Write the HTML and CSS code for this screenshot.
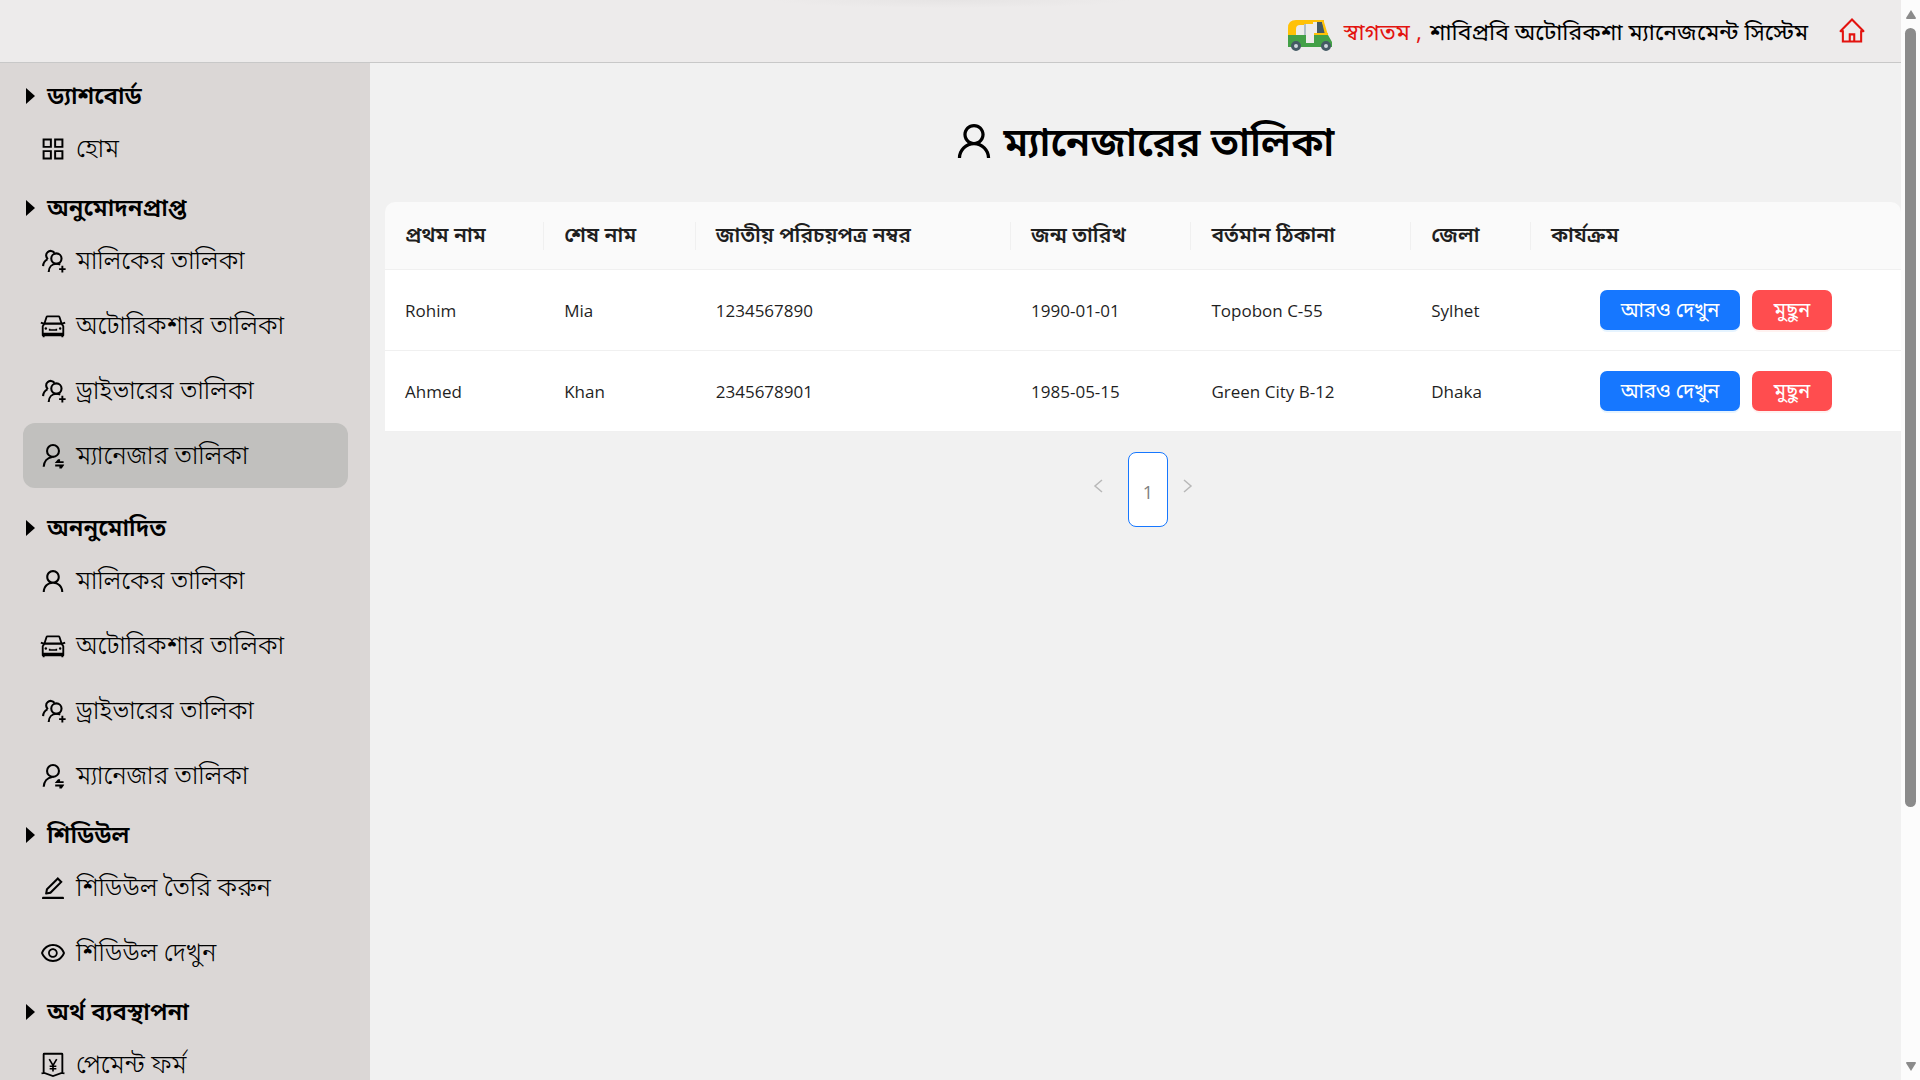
FILE: index.html
```
<!DOCTYPE html>
<html lang="bn">
<head>
<meta charset="utf-8">
<title>ম্যানেজারের তালিকা</title>
<link rel="stylesheet" href="styles.css">
</head>
<body>
<svg class="sprite" aria-hidden="true">
  <symbol id="user" viewBox="0 0 1024 1024"><path d="M858.5 763.6a374 374 0 00-80.6-119.5 375.63 375.63 0 00-119.5-80.6c-.4-.2-.8-.3-1.2-.5C719.5 518 760 444.7 760 362c0-137-111-248-248-248S264 225 264 362c0 82.7 40.5 156 102.8 201.1-.4.2-.8.3-1.2.5-44.8 18.9-85 46-119.5 80.6a375.63 375.63 0 00-80.6 119.5A371.7 371.7 0 00136 901.8a8 8 0 008 8.2h60c4.4 0 7.9-3.5 8-7.8 2-77.2 33-149.5 87.8-204.3 56.7-56.7 132-87.9 212.2-87.9s155.5 31.2 212.2 87.9C779 752.7 810 825 812 902.2c.1 4.4 3.6 7.8 8 7.8h60a8 8 0 008-8.2c-1-47.8-10.9-94.3-29.5-138.2zM512 534c-45.9 0-89.1-17.9-121.6-50.4S340 407.9 340 362c0-45.9 17.9-89.1 50.4-121.6S466.1 190 512 190s89.1 17.9 121.6 50.4S684 316.1 684 362c0 45.9-17.9 89.1-50.4 121.6S557.9 534 512 534z"/></symbol>
  <symbol id="grid" viewBox="0 0 1024 1024"><g fill="none" stroke="currentColor" stroke-width="72"><path d="M168 168h266v266H168zM590 168h266v266H590zM168 590h266v266H168zM590 590h266v266H590z"/></g></symbol>
  <symbol id="users" viewBox="0 0 1024 1024"><g fill="none" stroke="currentColor" stroke-width="76"><circle cx="636" cy="422" r="188"/><path d="M354 912C360 740 470 614 640 614c50 0 96 10 136 32M150 700c8-126 60-206 158-248M326 446c-80-66-86-200-14-254 76-74 196-62 254 22"/><path d="M854 690v240M734 810h240" stroke-width="70"/></g></symbol>
  <symbol id="switch" viewBox="0 0 1024 1024"><g fill="none" stroke="currentColor" stroke-width="76"><circle cx="512" cy="326" r="218"/><path d="M172 908c8-190 130-336 310-362"/></g><path d="M770 630v74h130v68H588c-8 0-10-8-5-13l112-129zM592 826h320c8 0 12 8 7 14L830 970h-84v-76H592z"/></symbol>
  <symbol id="car" viewBox="0 0 1024 1024"><g fill="none" stroke="currentColor" stroke-width="68"><path d="M130 428h764M204 400l72-216q8-22 30-22h412q22 0 30 22l72 216M136 850V520l68-100h616l68 100v330zM124 790h776M68 386l104 42M956 386l-104 42M170 850v72M854 850v72" stroke-linejoin="round"/><path d="M388 608v50h248v-50" stroke-width="56"/></g><circle cx="250" cy="602" r="44"/><circle cx="774" cy="602" r="44"/></symbol>
  <symbol id="edit" viewBox="0 0 1024 1024"><path d="M257.700 752c2 0 4-.2 6-.5L431.900 722c2-.4 3.900-1.300 5.300-2.800l423.900-423.900a9.960 9.960 0 000-14.100L694.900 114.900c-1.900-1.900-4.400-2.900-7.100-2.900s-5.200 1-7.100 2.900L256.800 538.800c-1.500 1.500-2.400 3.300-2.800 5.300l-29.500 168.200a33.500 33.500 0 009.400 29.800c6.600 6.400 14.900 9.900 23.800 9.900zm67.400-174.400L687.800 215l73.300 73.300-362.700 362.600-88.900 15.700 15.600-89zM880 836H144c-17.700 0-32 14.300-32 32v36c0 4.400 3.600 8 8 8h784c4.400 0 8-3.600 8-8v-36c0-17.700-14.300-32-32-32z"/></symbol>
  <symbol id="eye" viewBox="0 0 1024 1024"><path d="M942.2 486.2C847.4 286.5 704.1 186 512 186c-192.2 0-335.4 100.5-430.2 300.3a60.3 60.3 0 000 51.5C176.6 737.5 319.900 838 512 838c192.200 0 335.400-100.500 430.200-300.300 7.700-16.200 7.700-35 0-51.500zM512 766c-161.300 0-279.400-81.800-362.700-254C232.600 339.800 350.700 258 512 258c161.300 0 279.400 81.800 362.700 254C791.500 684.200 673.400 766 512 766zm-4-430c-97.200 0-176 78.800-176 176s78.800 176 176 176 176-78.800 176-176-78.800-176-176-176zm0 288c-61.900 0-112-50.100-112-112s50.100-112 112-112 112 50.100 112 112-50.100 112-112 112z"/></symbol>
  <symbol id="pay" viewBox="0 0 1024 1024"><g fill="none" stroke="currentColor" stroke-width="68"><path d="M170 790V120q0-20 20-20h644q20 0 20 20v670M92 820l100-20 320 116 320-116 100 20"/><path d="M376 300l136 230 136-230M512 530v220M390 558h244M390 648h244" stroke-width="60"/></g></symbol>
  <symbol id="home" viewBox="0 0 1024 1024"><g fill="none" stroke="currentColor" stroke-width="76"><path d="M96 508L512 94l416 414q10 10-4 10H846v376H178V518H100q-14 0-4-10zM430 894V634h164v260"/></g></symbol>
</svg>
<div class="window">
  <div class="app">
    <header class="topbar">
      <svg class="rickshaw" viewBox="0 0 44 31" aria-hidden="true">
        <path d="M0 19V8Q0 0 8 0h28v2H25v17z" fill="#ffc107"/>
        <path d="M8 15V9q0-4 4-4h4v10zM18 4h8v19h-8z" fill="#edebeb"/>
        <path d="M16 4h2v12h-2z" fill="#b0bec5"/>
        <path d="M29 2h5l4 11H29z" fill="#455a64"/>
        <path d="M34 2h2l4 13h-3z" fill="#ffc107"/>
        <path d="M0 15h18v8h8v-8h14l4 7v5H0z" fill="#43a047"/>
        <path d="M26 13h14v2H26z" fill="#ffc107"/>
        <g fill="#cfd8dc" stroke="#455a64" stroke-width="3"><circle cx="8" cy="26" r="3.500"/><circle cx="38" cy="26" r="3.500"/></g>
      </svg>
      <p class="welcome"><span class="greeting">স্বাগতম ,</span><span>শাবিপ্রবি অটোরিকশা ম্যানেজমেন্ট সিস্টেম</span></p>
      <a class="home-link" href="#" aria-label="হোম"><svg class="icon"><use href="#home"/></svg></a>
    </header>
    <div class="body">
      <nav class="sidebar">
        <h2 class="section">ড্যাশবোর্ড</h2>
        <a class="item" href="#"><svg class="icon"><use href="#grid"/></svg>হোম</a>
        <h2 class="section">অনুমোদনপ্রাপ্ত</h2>
        <a class="item" href="#"><svg class="icon"><use href="#users"/></svg>মালিকের তালিকা</a>
        <a class="item" href="#"><svg class="icon"><use href="#car"/></svg>অটোরিকশার তালিকা</a>
        <a class="item" href="#"><svg class="icon"><use href="#users"/></svg>ড্রাইভারের তালিকা</a>
        <a class="item active" href="#"><svg class="icon"><use href="#switch"/></svg>ম্যানেজার তালিকা</a>
        <h2 class="section">অননুমোদিত</h2>
        <a class="item" href="#"><svg class="icon"><use href="#user"/></svg>মালিকের তালিকা</a>
        <a class="item" href="#"><svg class="icon"><use href="#car"/></svg>অটোরিকশার তালিকা</a>
        <a class="item" href="#"><svg class="icon"><use href="#users"/></svg>ড্রাইভারের তালিকা</a>
        <a class="item" href="#"><svg class="icon"><use href="#switch"/></svg>ম্যানেজার তালিকা</a>
        <h2 class="section">শিডিউল</h2>
        <a class="item" href="#"><svg class="icon"><use href="#edit"/></svg>শিডিউল তৈরি করুন</a>
        <a class="item" href="#"><svg class="icon"><use href="#eye"/></svg>শিডিউল দেখুন</a>
        <h2 class="section">অর্থ ব্যবস্থাপনা</h2>
        <a class="item" href="#"><svg class="icon"><use href="#pay"/></svg>পেমেন্ট ফর্ম</a>
      </nav>
      <main class="content">
        <h1 class="title"><svg class="title-icon"><use href="#user"/></svg>ম্যানেজারের তালিকা</h1>
        <table class="managers">
          <colgroup><col class="c-first"><col class="c-last"><col class="c-nid"><col class="c-birth"><col class="c-address"><col class="c-district"><col></colgroup>
          <thead>
            <tr><th>প্রথম নাম</th><th>শেষ নাম</th><th>জাতীয় পরিচয়পত্র নম্বর</th><th>জন্ম তারিখ</th><th>বর্তমান ঠিকানা</th><th>জেলা</th><th>কার্যক্রম</th></tr>
          </thead>
          <tbody>
            <tr><td>Rohim</td><td>Mia</td><td>1234567890</td><td>1990-01-01</td><td>Topobon C-55</td><td>Sylhet</td><td><div class="actions"><button class="btn more" type="button">আরও দেখুন</button><button class="btn delete" type="button">মুছুন</button></div></td></tr>
            <tr><td>Ahmed</td><td>Khan</td><td>2345678901</td><td>1985-05-15</td><td>Green City B-12</td><td>Dhaka</td><td><div class="actions"><button class="btn more" type="button">আরও দেখুন</button><button class="btn delete" type="button">মুছুন</button></div></td></tr>
          </tbody>
        </table>
        <div class="pagination">
          <button class="step" type="button" disabled aria-label="আগের পাতা"><svg width="10" height="14" viewBox="0 0 10 14"><path d="M9 1L2 7l7 6"/></svg></button>
          <button class="page" type="button">1</button>
          <button class="step" type="button" disabled aria-label="পরের পাতা"><svg width="10" height="14" viewBox="0 0 10 14"><path d="M1 1l7 6-7 6"/></svg></button>
        </div>
      </main>
    </div>
  </div>
  <div class="scrollbar" aria-hidden="true">
    <svg width="12" height="9" viewBox="0 0 12 9"><path d="M6 0l5 8q0 1-1 1H2q-1 0-1-1z"/></svg>
    <div class="track"><div class="thumb"></div></div>
    <svg width="12" height="9" viewBox="0 0 12 9"><path d="M6 9l5-8q0-1-1-1H2Q1 0 1 1z"/></svg>
  </div>
</div>
</body>
</html>
```
FILE: styles.css
```
* { box-sizing: border-box; }

body {
  margin: 0;
  background: #f1f1f1;
  color: #000;
  font-family: "Open Sans", "Noto Sans Bengali", sans-serif;
}

.sprite { display: none; }

.window { display: flex; height: 100vh; overflow: hidden; }

.app { flex: 1; min-width: 0; display: flex; flex-direction: column; }

.icon { width: 28px; height: 28px; flex: none; display: block; fill: currentColor; }

/* Top bar */
.topbar {
  display: flex;
  flex: none;
  align-items: center;
  justify-content: flex-end;
  height: 63px;
  padding-right: 35px;
  background: radial-gradient(180px 8px at 50% 0, #e6e4e4, #edebeb) #edebeb;
  border-bottom: 1px solid #c8c8c8;
}
.rickshaw { width: 44px; height: 31px; margin: 8px 12px 0 0; }
.welcome { display: flex; gap: 8px; margin: 0; font-size: 23px; line-height: 32px; white-space: nowrap; }
.greeting { color: #e3130f; }
.home-link { margin-left: 30px; color: #e3130f; }

.body { display: flex; flex: 1; min-height: 0; }

/* Sidebar */
.sidebar {
  flex: none;
  width: 370px;
  padding: 6px 22px 0 23px;
  background: #dbd7d6;
  overflow: hidden;
}
.section {
  display: flex;
  align-items: center;
  gap: 12px;
  height: 47px;
  margin: 0;
  padding: 7px 0 0 3px;
  font-size: 24px;
  font-weight: 600;
}
.section::before {
  content: "";
  border-left: 9px solid #000;
  border-top: 8px solid transparent;
  border-bottom: 8px solid transparent;
}
.item {
  display: flex;
  align-items: center;
  gap: 9px;
  height: 65px;
  padding: 0 16px;
  border-radius: 12px;
  color: #000;
  font-size: 25px;
  font-weight: 300;
  text-decoration: none;
  white-space: nowrap;
}
.active { margin-bottom: 13px; background: #c1c0be; }

/* Content */
.content { flex: 1; min-width: 0; padding: 46px 0 0 15px; }
.title {
  display: flex;
  align-items: center;
  justify-content: center;
  gap: 8px;
  margin: 0 0 29px;
  font-size: 40px;
  font-weight: 600;
  line-height: 64px;
}
.title-icon { width: 44px; height: 44px; }

.managers {
  width: 100%;
  table-layout: fixed;
  border-collapse: separate;
  border-spacing: 0;
  color: #1f1f1f;
  font-size: 17px;
}
.c-first { width: 10.5%; }
.c-last { width: 10%; }
.c-nid { width: 20.8%; }
.c-birth { width: 11.9%; }
.c-address { width: 14.5%; }
.c-district { width: 7.9%; }
.managers th, .managers td {
  padding: 0 20px;
  border-bottom: 1px solid #f0f0f0;
  text-align: left;
  white-space: nowrap;
}
.managers th {
  height: 68px;
  font-size: 21px;
  font-weight: 600;
  background: linear-gradient(#f0f0f0, #f0f0f0) right center / 1px 28px no-repeat #fafafa;
}
.managers th:first-child { border-top-left-radius: 10px; }
.managers th:last-child { border-top-right-radius: 10px; background: #fafafa; }
.managers td { height: 81px; background: #fff; }

.actions { display: flex; justify-content: center; gap: 12px; }
.btn {
  height: 40px;
  padding: 0;
  border: 0;
  border-radius: 7px;
  color: #fff;
  font-family: inherit;
  font-size: 20px;
}
.more { width: 140px; background: #1677ff; box-shadow: 0 2px 0 rgba(5, 145, 255, 0.1); }
.delete { width: 80px; background: #ff4d4f; box-shadow: 0 2px 0 rgba(255, 38, 5, 0.06); }

/* Pagination */
.pagination { display: flex; align-items: center; justify-content: center; margin-top: 20px; }
.step {
  display: flex;
  align-items: center;
  justify-content: center;
  width: 40px;
  height: 40px;
  padding: 0 0 8px;
  border: 0;
  background: none;
}
.step path { fill: none; stroke: #b8b8b8; stroke-width: 1.5; }
.page {
  width: 40px;
  height: 75px;
  margin-left: 10px;
  padding: 4px 0 0;
  border: 1px solid #1677ff;
  border-radius: 8px;
  background: #fff;
  color: #808080;
  font-family: inherit;
  font-size: 18px;
}

/* Window scroll bar */
.scrollbar {
  flex: none;
  display: flex;
  flex-direction: column;
  align-items: center;
  gap: 9px;
  width: 19px;
  padding: 10px 0 9px;
  background: #fcfcfc;
}
.scrollbar svg { display: block; fill: #8b8b8b; }
.track { flex: 1; width: 11px; }
.thumb { height: 76%; border-radius: 6px; background: #8b8b8b; }
```
